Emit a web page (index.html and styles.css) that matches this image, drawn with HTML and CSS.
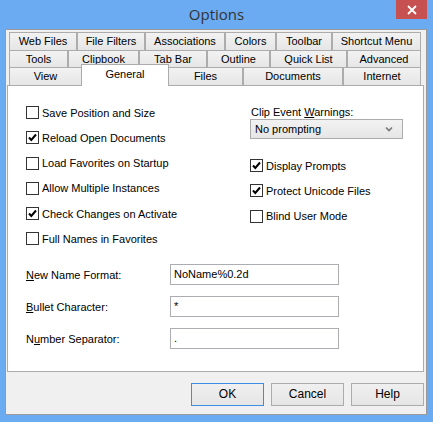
FILE: index.html
```html
<!DOCTYPE html>
<html lang="en">
<head>
    <meta charset="UTF-8">
    <title>Options</title>
    <link rel="stylesheet" href="styles.css">
</head>
<body>
    <div class="window">
        <div class="titlebar">
            <span class="title">Options</span>
            <div class="close">
                <svg width="10" height="10" viewBox="0 0 10 10"><path d="M1 1L9 9M9 1L1 9" stroke="#fff" stroke-width="1.8"/></svg>
            </div>
        </div>

        <div class="client">
            <!-- tab strip, three rows -->
            <div class="tabs">
                <div class="tab-row row1">
                    <div class="tab">Web Files</div>
                    <div class="tab">File Filters</div>
                    <div class="tab">Associations</div>
                    <div class="tab">Colors</div>
                    <div class="tab">Toolbar</div>
                    <div class="tab">Shortcut Menu</div>
                </div>
                <div class="tab-row row2">
                    <div class="tab">Tools</div>
                    <div class="tab">Clipbook</div>
                    <div class="tab">Tab Bar</div>
                    <div class="tab">Outline</div>
                    <div class="tab">Quick List</div>
                    <div class="tab">Advanced</div>
                </div>
                <div class="tab-row row3">
                    <div class="tab">View</div>
                    <div class="tab active">General</div>
                    <div class="tab">Files</div>
                    <div class="tab">Documents</div>
                    <div class="tab">Internet</div>
                </div>
            </div>

            <div class="panel">
                <div class="top">
                    <div class="checks">
                        <label class="check"><span class="box"></span>Save Position and Size</label>
                        <label class="check"><span class="box on"></span>Reload Open Documents</label>
                        <label class="check"><span class="box"></span>Load Favorites on Startup</label>
                        <label class="check"><span class="box"></span>Allow Multiple Instances</label>
                        <label class="check"><span class="box on"></span>Check Changes on Activate</label>
                        <label class="check"><span class="box"></span>Full Names in Favorites</label>
                    </div>
                    <div class="side">
                        <div class="caption">Clip Event <u>W</u>arnings:</div>
                        <div class="select">
                            <span>No prompting</span>
                            <svg width="8" height="6" viewBox="0 0 8 6"><path d="M1 1.5L4 4.5L7 1.5" stroke="#777" stroke-width="1.6" fill="none"/></svg>
                        </div>
                        <div class="checks side-checks">
                            <label class="check"><span class="box on"></span>Display Prompts</label>
                            <label class="check"><span class="box on"></span>Protect Unicode Files</label>
                            <label class="check"><span class="box"></span>Blind User Mode</label>
                        </div>
                    </div>
                </div>

                <div class="fields">
                    <div class="field">
                        <span class="field-label"><u>N</u>ew Name Format:</span>
                        <div class="textbox">NoName%0.2d</div>
                    </div>
                    <div class="field">
                        <span class="field-label"><u>B</u>ullet Character:</span>
                        <div class="textbox">*</div>
                    </div>
                    <div class="field">
                        <span class="field-label">N<u>u</u>mber Separator:</span>
                        <div class="textbox">.</div>
                    </div>
                </div>
            </div>

            <div class="buttons">
                <div class="btn default">OK</div>
                <div class="btn">Cancel</div>
                <div class="btn">Help</div>
            </div>
        </div>
    </div>

    <script>
        // tick mark for checked boxes
        document.querySelectorAll('.box.on').forEach(function (box) {
            box.innerHTML = '<svg width="11" height="11" viewBox="0 0 11 11"><path d="M2 5.5L4.3 8L9 2.5" stroke="#000" stroke-width="2" fill="none"/></svg>';
        });
    </script>
</body>
</html>
```

FILE: styles.css
```css
body {
    margin: 0;
    font-family: "Liberation Sans", Arial, sans-serif;
    font-size: 11px;
    color: #000;
}
.window {
    width: 433px;
    height: 422px;
    background-color: #6aabf2;
    position: relative;
}
.titlebar {
    height: 29px;
    display: flex;
    justify-content: center;
}
.title {
    font-family: "Open Sans", "Noto Sans", sans-serif;
    font-size: 15px;
    color: #333;
    line-height: 28px;
}
.close {
    position: absolute;
    top: 0;
    left: 396px;
    width: 31px;
    height: 19px;
    background-color: #c75050;
    display: flex;
    align-items: center;
    justify-content: center;
}
.client {
    margin-left: 5px;
    width: 420px;
    height: 384px;
    background-color: #f0f0f0;
    border: 1px solid #9a9a9a;
}

/* tabs */
.tabs {
    padding: 2px 0 0 3px;
    width: 412px;
}
.tab-row {
    display: grid;
}
.row1 {
    grid-template-columns: 68px 68px 80px 51px 56px 89px;
    height: 18px;
}
.row2 {
    grid-template-columns: 59px 71px 68px 63px 77px 74px;
    height: 17px;
}
.row3 {
    grid-template-columns: 73px 86px 75px 100px 78px;
    height: 18px;
}
.tab {
    box-sizing: border-box;
    height: 19px;
    border: 1px solid #acacac;
    border-bottom: none;
    background: linear-gradient(#f2f2f2, #e5e5e5);
    text-align: center;
    line-height: 17px;
    white-space: nowrap;
}
.tab.active {
    position: relative;
    z-index: 2;
    margin: -3px -1px 0 -1px;
    height: 22px;
    background: #fff;
    line-height: 19px;
}

.panel {
    position: relative;
    z-index: 1;
    margin-left: 1px;
    width: 415px;
    height: 285px;
    background-color: #fff;
    border: 1px solid #acacac;
    padding: 0;
}
.top {
    display: grid;
    grid-template-columns: 224px 153px;
    padding: 20px 0 0 18px;
}
.checks {
    display: flex;
    flex-direction: column;
    gap: 12.3px;
}
.check {
    display: flex;
    align-items: center;
    height: 13px;
    white-space: nowrap;
}
.box {
    box-sizing: border-box;
    width: 13px;
    height: 13px;
    border: 1px solid #333;
    background: #fff;
    margin-right: 3px;
    display: flex;
    align-items: center;
    justify-content: center;
}
.caption {
    height: 13px;
    line-height: 13px;
    margin-left: 1px;
}
.select {
    box-sizing: border-box;
    margin-top: 0;
    height: 20px;
    border: 1px solid #acacac;
    background: linear-gradient(#f2f2f2, #e6e6e6);
    display: flex;
    align-items: center;
    justify-content: space-between;
    padding: 0 9px 0 4px;
}
.side-checks {
    margin-top: 20px;
}

.fields {
    display: flex;
    flex-direction: column;
    gap: 11px;
    padding: 19px 0 0 18px;
}
.field {
    display: flex;
    align-items: center;
}
.field-label {
    width: 144px;
}
.textbox {
    box-sizing: border-box;
    width: 169px;
    height: 21px;
    border: 1px solid #abadb3;
    background: #fff;
    padding: 2px 3px;
    line-height: 15px;
}

.buttons {
    display: flex;
    justify-content: flex-end;
    gap: 7px;
    padding: 11px 2px 0 0;
}
.btn {
    box-sizing: border-box;
    width: 73px;
    height: 23px;
    border: 1px solid #acacac;
    background: linear-gradient(#f0f0f0, #e5e5e5);
    text-align: center;
    line-height: 21px;
    font-size: 12px;
}
.btn.default {
    border-color: #3c8de5;
}
```
